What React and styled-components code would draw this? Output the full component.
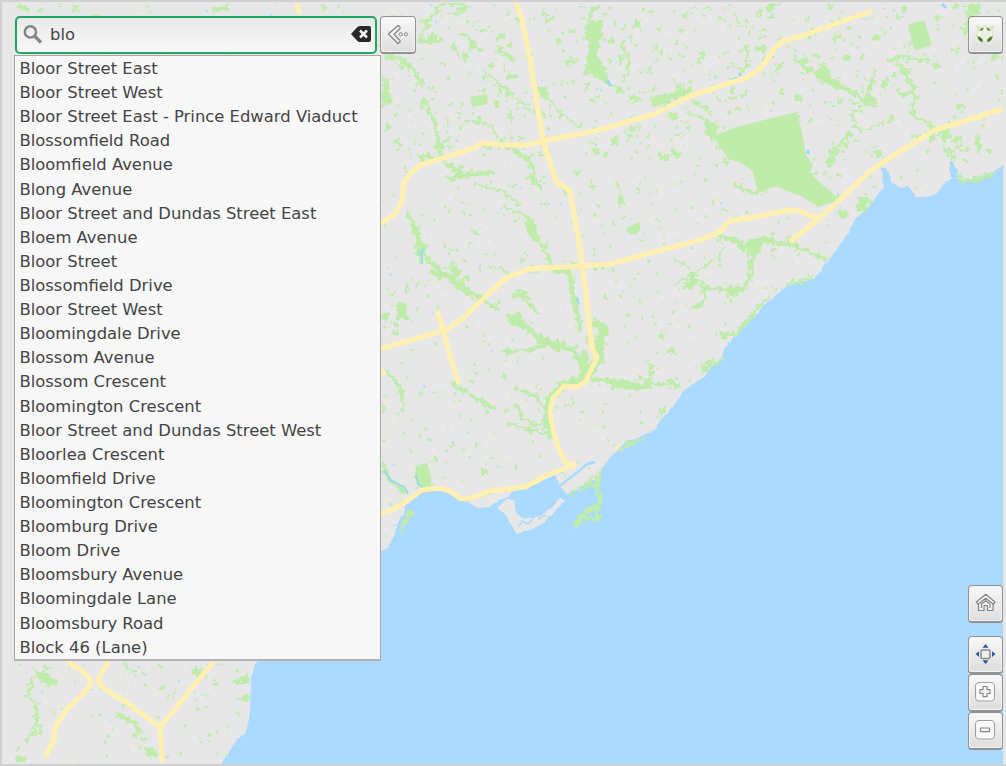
import React from "react";
import styled, { createGlobalStyle, css } from "styled-components";

const GlobalStyle = createGlobalStyle`
  * { box-sizing: border-box; }
  body { margin: 0; overflow: hidden; }
  button, input { font: inherit; }
`;

const Page = styled.main`
  position: relative;
  width: 1006px;
  height: 766px;
  padding: 16px 3px 16px 15px;
  display: flex;
  justify-content: space-between;
  overflow: hidden;
  background: #e7e7e7;
  color: #444;
  font-family: "DejaVu Sans", sans-serif;
  font-size: 16.4px;
`;

const MapCanvas = styled.svg`
  position: absolute;
  inset: 0;
  width: 1006px;
  height: 766px;
`;

const SearchArea = styled.section`
  position: relative;
  width: 401px;
`;

const SearchBar = styled.div`
  display: flex;
  gap: 3px;
`;

const SearchField = styled.label`
  display: flex;
  align-items: center;
  width: 362px;
  height: 38px;
  padding: 0 4px 2px 6px;
  border: 2px solid #22a565;
  border-radius: 5px;
  background: linear-gradient(#e9e9e9, #f8f8f8);
`;

const Query = styled.input`
  flex: 1;
  min-width: 0;
  height: 30px;
  margin: 0 0 0 7px;
  padding: 0;
  border: 0;
  outline: 0;
  background: transparent;
  color: #444;
`;

const buttonLook = css`
  display: flex;
  align-items: center;
  justify-content: center;
  width: 36px;
  padding: 0;
  border: 1px solid #929292;
  border-bottom-width: 2px;
  border-radius: 4px;
  background: linear-gradient(#f8f8f8, #dedede);
  box-shadow: inset 0 0 0 1px #f4f4f4;
`;

const ToolButton = styled.button`
  ${buttonLook}
  height: 38px;
  margin-top: ${(p) => p.$gap || 0}px;
`;

const ClearButton = styled.button`
  display: flex;
  padding: 0;
  border: 0;
  background: none;
`;

const Suggestions = styled.ul`
  position: relative;
  width: 367px;
  height: 606px;
  margin: 1px 0 0 -1px;
  padding: 1px 4px 0;
  border: 1px solid #a8a8a8;
  border-bottom: 2px solid #b2b2b2;
  background: #f7f7f7;
  list-style: none;
`;

const Suggestion = styled.li`
  height: 24.11px;
  padding-left: 0.5px;
  line-height: 24px;
  white-space: nowrap;
`;

const Tools = styled.nav`
  position: relative;
  display: flex;
  flex-direction: column;
  width: 35px;

  ${ToolButton} {
    width: 35px;
    padding: 0 2px 1px 0;
  }
`;

const streets = [
  "Bloor Street East", "Bloor Street West", "Bloor Street East - Prince Edward Viaduct",
  "Blossomfield Road", "Bloomfield Avenue", "Blong Avenue",
  "Bloor Street and Dundas Street East", "Bloem Avenue", "Bloor Street",
  "Blossomfield Drive", "Bloor Street West", "Bloomingdale Drive", "Blossom Avenue",
  "Blossom Crescent", "Bloomington Crescent", "Bloor Street and Dundas Street West",
  "Bloorlea Crescent", "Bloomfield Drive", "Bloomington Crescent", "Bloomburg Drive",
  "Bloom Drive", "Bloomsbury Avenue", "Bloomingdale Lane", "Bloomsbury Road", "Block 46 (Lane)",
];

const LAND =
  "M2 2H1003V165L996 170 986 174 975 179 962 181 957 178 958 170 952 163 949 170 952 178 944 184 936 194 927 197 916 197 912 191 909 187 903 186 905 188 898 187 891 181 889 173 886 168 881 168 882 178 884 187 878 194 872 203 863 212 855 219 851 228 844 239 836 250 830 259 824 265 820 272 814 279 800 282 787 286 774 297 763 306 754 317 748 321 740 328 736 335 730 343 724 349 721 360 712 366 706 375 695 383 683 391 677 401 667 413 660 421 655 430 645 434 635 439 626 441 619 449 611 456 606 463 601 470 599 481 593 480 584 485 567 495 561 487 558 482 555 475 543 480 530 486 512 491 509 497 499 500 489 507 478 508 471 504 461 500 450 494 440 490 423 491 414 496 406 504 404 514 398 522 395 534 388 547 381 552 320 600 256 661 251 678 250 714 246 733 237 739 230 750 221 764H2Z";

const roads = [
  "M516 1L522 20 531 65 539 115 543 141 549 159 556 181 563 186 570 191 575 219 580 247 582 267 586 292 589 324 592 348 597 357 593 366 585 382 577 387 564 386 553 398 550 412 553 430 558 447 565 462 576 466",
  "M374 228L395 214 402 201 404 183 411 172 421 165 443 158 468 150 483 143 504 145 527 145 543 141 600 130 657 113 690 96 748 77 756 72 764 64 774 49 783 41 805 35 835 24 872 11",
  "M376 350L418 338 446 330 463 318 490 292 506 278 529 269 566 267 611 264 646 254 700 240 718 233 730 221 760 216 790 210 800 211 812 217 820 217",
  "M790 242L803 231 821 217 849 191 870 171 893 156 935 130 955 124 1003 109",
  "M437 311L442 326 449 353 459 384",
  "M374 516L394 509 407 501 422 490 439 488 450 491 461 499 474 497 489 491 525 487 545 476 576 464",
  "M374 365L385 374",
  "M67 661L79 669 88 676 91 683 85 692 67 709 55 727 53 742 45 757",
  "M109 661L100 675 98 682 106 690 126 702 160 727 161 740 162 762",
  "M214 661L196 683 176 708 160 727",
  "M296 0L299 14",
];

const parks = [
  "713 136L740 126 796 112 801 128 806 155 813 165 810 173 824 186 838 198 833 202 818 207 803 197 785 190 776 186 761 192 756 186 753 171 741 163 728 159 720 146Z",
  "908 25L924 20 932 44 915 51Z",
  "470 97L487 94 488 104 472 107Z",
  "416 465L426 463 431 476 434 487 422 488 416 480Z",
  "588 22L601 20 603 36 597 52 608 73 600 80 585 70 586 57 591 49 584 38Z",
  "648 102L665 94 682 89 694 86 689 94 670 101 660 108Z",
  "690 97L700 104 710 108 708 111 694 105Z",
  "704 119L719 123 715 140 706 136Z",
  "382 81L388 82 393 103 381 106Z",
  "396 303L407 303 408 319 398 320Z",
  "626 228L639 222 640 232 626 234Z",
  "858 197L872 200 865 212 858 212Z",
  "840 207L849 212 847 218 839 216Z",
  "939 131L948 127 952 135 944 143Z",
  "823 64L829 68 832 78 841 84 858 91 854 94 835 88 822 82 814 73Z",
  "535 335L550 340 566 341 565 351 555 350 538 344Z",
  "506 316L522 313 525 328 512 325Z",
  "578 379L582 350 587 349 590 368 583 381Z",
  "417 243L430 244 422 254 421 267 418 258Z",
  "525 218L532 216 535 236 543 244 532 242 526 232Z",
  "447 176L460 173 462 178 449 182Z",
  "418 155L432 153 434 158 421 161Z",
  "682 288L692 276 700 281 687 292Z",
  "748 239L764 239 760 254 746 255Z",
  "725 291L745 285 748 288 731 298Z",
  "785 283L799 278 817 275 809 281 790 286Z",
  "755 312L761 300 770 297 760 308Z",
  "666 354L672 345 676 354Z",
  "658 421L663 405 666 408Z",
  "33 668L45 674 59 681 55 686 38 679Z",
  "15 758L28 755 24 763 15 763Z",
  "142 745L155 750 159 758 149 755Z",
  "190 668L203 670 198 679Z",
  "235 677L248 675 248 684 236 684Z",
  "235 698L249 695 249 702 236 700Z",
  "964 5L980 3 979 15 968 18Z",
  "964 22L970 20 971 33 964 36Z",
  "600 468L602 474 600 488 597 479Z",
  "610 140L618 136 620 143 611 145Z",
  "659 155L669 154 669 160 661 162Z",
  "494 36L505 32 506 38 498 40Z",
  "645 68L651 65 653 71 647 74Z",
  "420 18L431 19 429 25 422 24Z",
  "863 97L877 99 876 106 864 105Z",
  "832 149L837 153 837 160 827 168 828 158Z",
  "975 139L980 138 982 147 976 149Z",
  "794 95L801 94 802 103 796 102Z",
  "483 470L487 469 487 475 483 474Z",
  "475 442L480 441 479 446 476 446Z",
  "617 195L622 197 623 204 618 205Z",
  "530 175L535 173 538 183 532 186Z",
  "452 262L460 270 461 278 454 276Z",
  "430 270L440 274 444 281 438 281Z",
  "382 312L390 314 387 321 381 320Z",
  "382 405L386 408 384 412 381 412Z",
];

const ravines = [
  [5, "M548 269L568 270 575 304 581 332"],
  [8, "M592 322L605 329 599 341 600 358 591 371 580 381 562 385 550 398 547 421 554 439"],
  [4, "M591 379L622 382 642 386 650 385 651 363"],
  [4, "M610 385L635 388 650 386"],
  [5, "M508 315L523 324 535 335 551 342 573 350 584 368"],
  [3, "M545 427L523 419 516 403"],
  [2, "M550 434L527 429 507 423"],
  [2, "M545 410L536 396 514 389"],
  [3, "M500 351L521 351 544 346"],
  [4, "M417 229L421 249 432 263 445 274 466 292 484 300 499 310"],
  [3, "M406 210L414 226 419 242"],
  [4, "M430 272L454 277 466 288 482 298"],
  [4, "M438 140L437 151 451 167 466 176 496 172"],
  [3, "M438 140L434 120 423 97"],
  [4, "M384 56L401 59 413 69 423 86"],
  [2, "M481 69L503 86 518 100 536 114"],
  [4, "M499 141L519 153 532 163 535 181 543 190"],
  [2, "M503 205L523 215 532 220"],
  [2, "M475 184L503 191 520 206"],
  [4, "M532 219L536 236 545 249 552 264"],
  [2, "M540 87L551 102 566 118 580 127"],
  [3, "M583 74L593 70 606 81 624 93"],
  [3, "M587 21L593 10 600 5"],
  [2, "M621 40L630 61 624 81"],
  [2, "M672 258L686 265 703 287"],
  [2, "M674 286L697 271 725 251"],
  [3, "M701 282L705 294 703 303 689 309"],
  [3, "M704 289L721 289 744 287 750 277 751 265"],
  [5, "M717 236L736 241 745 249 762 239 787 245"],
  [5, "M753 239L754 250 750 269"],
  [4, "M788 243L809 252 828 260"],
  [3, "M792 56L805 67 821 77 835 84 854 94 866 100"],
  [3, "M867 101L870 87 876 68"],
  [3, "M897 62L906 75 914 90 913 115 921 119 934 128"],
  [3, "M887 61L901 57 925 61"],
  [3, "M912 91L903 96 897 90"],
  [3, "M732 183L745 190 758 193"],
  [2, "M768 12L774 5 785 3"],
  [3, "M746 44L748 66 739 72"],
  [3, "M829 165L834 150 852 132"],
  [2, "M863 105L850 115 861 132 881 124"],
  [2, "M686 112L705 120 715 131"],
  [2, "M590 180L594 193M615 180L621 193 624 205"],
  [3, "M643 384L677 384"],
  [3, "M382 369L400 386 404 407"],
  [3, "M384 462L387 478 405 493"],
  [3, "M451 383L480 400 495 409"],
  [3, "M33 677L29 693 37 710 35 731 25 741"],
  [4, "M117 714L131 721 142 732"],
  [2, "M28 738L41 733 38 721"],
  [3, "M668 380L681 384 671 391"],
  [3, "M713 359L701 371 723 359"],
  [3, "M720 333L734 335 753 315"],
  [3, "M620 449L630 444 645 437"],
  [2, "M596 487L588 485 584 492"],
  [3, "M406 514L414 512 403 523 401 533"],
  [3, "M597 480L599 499 597 521 585 517 575 527 582 514 599 504"],
  [5, "M576 526L582 515 588 509"],
  [2, "M602 475L594 484 586 487M570 495L585 485 597 475"],
  [4, "M18 5L29 11M73 7L78 9M213 10L229 7"],
  [3, "M441 4L460 3 468 7 450 15M460 33L469 39 481 52"],
  [2, "M464 121L488 124 499 138M508 109L512 122"],
  [4, "M536 88L544 90 547 100M496 49L509 55 515 64"],
  [2, "M444 243L452 250M500 270L510 274"],
  [3, "M441 3L418 40 443 40M388 17L400 19"],
  [3, "M511 295L524 296 534 309 541 315M518 290L530 300"],
  [3, "M957 174L963 181 978 179 995 172M953 149L953 160"],
];

function makeRandom(seed) {
  return () => {
    seed = (seed * 1664525 + 1013904223) >>> 0;
    return seed / 4294967296;
  };
}

function makeSpecks(count, seed, size, area = [15, 3, 985, 759]) {
  const random = makeRandom(seed);
  let path = "";
  for (let i = 0; i < count; i += 1) {
    const x = area[0] + random() * area[2];
    const y = area[1] + random() * area[3];
    const w = 1 + random() * size;
    const h = 1 + random() * size;
    const lean = random() * 2 - 1;
    path += `M${x.toFixed(1)} ${y.toFixed(1)}l${w.toFixed(1)} ${lean.toFixed(1)} ${lean.toFixed(1)} ${h.toFixed(1)} ${(-w).toFixed(1)} ${(lean / 2).toFixed(1)}Z`;
  }
  return path;
}

const smallParks = makeSpecks(2000, 37, 2.4);
const largerParks = makeSpecks(750, 93, 5);
const northernParks = makeSpecks(260, 41, 6, [382, 3, 620, 150]);
const ponds = makeSpecks(190, 71, 1.2);

function CityMap() {
  return (
    <MapCanvas viewBox="0 0 1006 766" aria-label="Toronto map">
      <defs>
        <clipPath id="land"><path d={LAND} /></clipPath>
        <clipPath id="extent"><path d="M15 3H1003V763H15Z" /></clipPath>
        <filter id="roughParks" x="0" y="0" width="1006" height="766" filterUnits="userSpaceOnUse">
          <feTurbulence type="fractalNoise" baseFrequency=".2" numOctaves="2" seed="8" />
          <feDisplacementMap in="SourceGraphic" scale="10" xChannelSelector="R" yChannelSelector="G" />
        </filter>
        <filter id="roughCoast" x="0" y="0" width="1006" height="766" filterUnits="userSpaceOnUse">
          <feTurbulence type="fractalNoise" baseFrequency=".2" numOctaves="1" seed="3" />
          <feDisplacementMap in="SourceGraphic" scale="3" xChannelSelector="R" yChannelSelector="G" />
        </filter>
      </defs>
      <path fill="#e7e7e7" d="M0 0H1006V766H0Z" />
      <path fill="#aadaff" d="M220 160H1003V764H220Z" />
      <path fill="#e7e7e7" d={LAND} filter="url(#roughCoast)" />
      <g clipPath="url(#extent)">
        <g clipPath="url(#land)" fill="#bfecab">
          <path d={smallParks} />
          <path d={largerParks + northernParks} filter="url(#roughParks)" />
          <path d={ponds} fill="#aadaff" />
        </g>
        <path d={"M" + parks[0]} fill="#bfecab" />
        <path d={"M" + parks[1]} fill="#bfecab" />
        <path d={"M" + parks[2]} fill="#bfecab" />
        <g fill="#bfecab" filter="url(#roughParks)">
          {parks.slice(3).map((d) => <path key={d} d={"M" + d} />)}
          <g fill="none" stroke="#bfecab" strokeLinejoin="bevel">
            {ravines.map(([width, d]) => <path key={d} d={d} strokeWidth={width + 0.4} />)}
          </g>
        </g>
        <path fill="#e7e7e7" filter="url(#roughCoast)" d="M497 508L507 499 514 500 516 512 523 519 540 516 552 507 560 498 565 501 556 510 543 523 532 529 517 534 512 526 505 514Z" />
        <path d="M517 505l1 9 5 2 4-4M519 527l3-6 6 3 5-5M538 519l8-4" fill="none" stroke="#aadaff" strokeWidth="1.5" />
        <path d="M557 488l22-17 8-7 8-2" fill="none" stroke="#aadaff" strokeWidth="2.5" />
        <path d="M384 470l6 10 14 7 4 7M416 475l2 9 5 4M576 297l3 7M419 254l6-6M422 264v-14M953 166l-3-4 3 2" fill="none" stroke="#9adfe0" strokeWidth="2.2" />
        <path d="M739 73l2 3M942 4l4 4M607 81l4 5M738 78l-8 3M808 150v4" fill="none" stroke="#9bd8ff" strokeWidth="3" />
        <path d="M614 447l5-3 1 3-4 4Z" fill="#f8eeb7" />
        <g fill="none" stroke="#fff0b2" strokeWidth="5" strokeLinejoin="round">
          {roads.map((d) => <path key={d} d={d} />)}
        </g>
      </g>
      <path d="M0 1H1006M1 0V766M0 765H1006" stroke="#d1d1d1" strokeWidth="2" />
    </MapCanvas>
  );
}

function SearchIcon() {
  return (
    <svg width="20" height="20" viewBox="0 0 20 20" fill="none" stroke="#858585">
      <circle cx="7.4" cy="7.9" r="5.6" strokeWidth="2.5" />
      <path d="M11.5 12L18 18.5" strokeWidth="3.2" />
    </svg>
  );
}

function ToolIcon({ kind }) {
  return (
    <svg width="22" height="22" viewBox="0 0 22 22" fill="none" stroke="#858585" strokeLinejoin="round">
      {kind === "back" && <>
        <path d="M11 1.5L1.5 10 11 19.5 13 18V16.5L7 10.2 13 4.5V3Z" fill="#f2f2f2" strokeWidth="1.3" />
        <circle cx="13.7" cy="10.3" r="1.6" fill="#eee" /><circle cx="18.9" cy="10.3" r="1.6" fill="#eee" />
      </>}
      {kind === "home" && <>
        <path d="M4.5 10.5V18.5H10V13.5H13.5V18.5H19V10.5L11.7 5Z" fill="#f2f2f2" strokeWidth="1.2" />
        <path d="M2.3 10L11.7 2.2 21 10 19.5 12.3 11.7 6.3 4 12.3Z" fill="#f3f3f3" strokeWidth="1.2" />
        <path d="M7.5 16V12L11.7 8.7 16 12V16" strokeWidth="1.2" />
      </>}
      {kind === "extent" && <>
        <rect x="7" y="7" width="9" height="8.5" rx="1" fill="#eeefeb" stroke="#888a85" strokeWidth="1.5" />
        <path d="M8.5 4.8L11.5 1 14.5 4.8ZM8.5 17.3L11.5 21 14.5 17.3ZM5 8.2V14L1.5 11ZM18 8.2V14L21.5 11Z" fill="#2b57a0" stroke="none" />
      </>}
      {(kind === "plus" || kind === "minus") && <>
        <rect x="1.5" y="1.5" width="19" height="18.5" rx="3.8" fill="#f9f9f9" stroke="#a0a0a0" strokeWidth="1.1" />
        {kind === "plus"
          ? <path d="M9 5.5H13V8.7H16V12.5H13V15.7H9V12.5H6V8.7H9Z" fill="#f4f4f4" stroke="#858585" strokeWidth="1.2" />
          : <path d="M6.5 9H15.5V12.7H6.5Z" fill="#f4f4f4" stroke="#858585" strokeWidth="1.2" />}
      </>}
      {kind === "full" && <>
        <circle cx="11" cy="11" r="6.4" fill="none" stroke="#d9eabd" strokeWidth="4.4" />
        <circle cx="11" cy="11" r="5.8" fill="none" stroke="#f4f8e9" strokeWidth="2.6" />
        <path d="M2 5Q1.5 1.8 5 2.5L6.2 4.5 3.5 7ZM16 4.5L17.2 2.5Q20.5 1.8 20 5L18.5 7Z" fill="#e9dcc2" stroke="none" />
        <path d="M5.5 8L6.5 5.5 10 4.5 8.3 7.4ZM12 4.5L15.5 5.5 16.5 8 13.7 7.4Z" fill="#718855" stroke="none" />
        <path d="M3 13L6.2 13.7 9.2 16.8 8.5 19.3Q4 18.3 3 13ZM19 13L15.8 13.7 12.8 16.8 13.5 19.3Q18 18.3 19 13Z" fill="#80a354" stroke="none" />
        <path d="M4.7 14.8L7.7 17.7M17.3 14.8L14.3 17.7" stroke="#496b31" strokeWidth="2" />
      </>}
    </svg>
  );
}

export default function App() {
  return (
    <>
      <GlobalStyle />
      <Page>
        <CityMap />
        <SearchArea>
          <SearchBar>
            <SearchField>
              <SearchIcon />
              <Query aria-label="Search streets" defaultValue="blo" />
              <ClearButton aria-label="Clear search">
                <svg width="20" height="16" viewBox="0 0 20 16">
                  <path d="M0 8L6 1.5Q7 0 9 0H18Q20 0 20 2V14Q20 16 18 16H9Q7 16 6 14.5Z" fill="#292929" />
                  <path d="M9 4.5L16 11.5M16 4.5L9 11.5" stroke="#f4f4f4" strokeWidth="2.5" />
                </svg>
              </ClearButton>
            </SearchField>
            <ToolButton aria-label="Hide search"><ToolIcon kind="back" /></ToolButton>
          </SearchBar>
          <Suggestions>
            {streets.map((name, index) => <Suggestion key={index}>{name}</Suggestion>)}
          </Suggestions>
        </SearchArea>
        <Tools>
          <ToolButton aria-label="Full screen"><ToolIcon kind="full" /></ToolButton>
          <ToolButton $gap={531} aria-label="Home"><ToolIcon kind="home" /></ToolButton>
          <ToolButton $gap={13} aria-label="Fit to extent"><ToolIcon kind="extent" /></ToolButton>
          <ToolButton aria-label="Zoom in"><ToolIcon kind="plus" /></ToolButton>
          <ToolButton aria-label="Zoom out"><ToolIcon kind="minus" /></ToolButton>
        </Tools>
      </Page>
    </>
  );
}
